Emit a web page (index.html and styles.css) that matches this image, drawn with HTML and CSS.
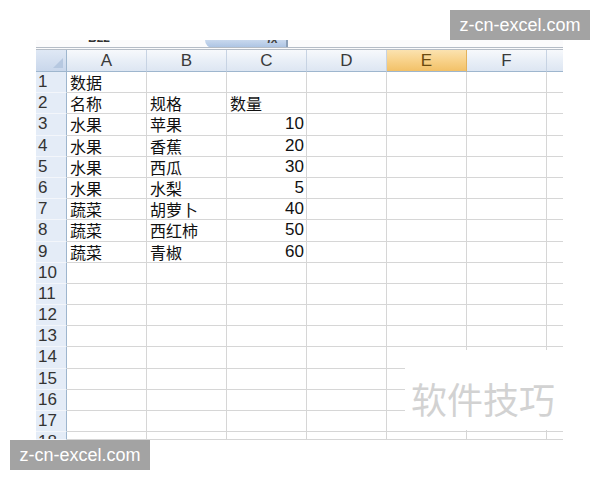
FILE: index.html
```html
<!DOCTYPE html>
<html lang="zh">
<head>
<meta charset="utf-8">
<link rel="stylesheet" href="styles.css">
</head>
<body>
<div class="page">
  <div class="badge badge-top">z-cn-excel.com</div>
  <div class="sheet">
    <div class="strip">
      <div class="namebox"><span>B22</span></div>
      <div class="fxtab"><span>fx</span></div>
    </div>
    <div class="grid">
      <div class="row head">
        <div class="corner"><span class="tri"></span></div>
        <div class="ch">A</div><div class="ch">B</div><div class="ch">C</div><div class="ch">D</div><div class="ch sel">E</div><div class="ch">F</div><div class="ch"></div>
      </div>
      <div class="row"><div class="rh">1</div><div class="c">数据</div><div class="c"></div><div class="c"></div><div class="c"></div><div class="c"></div><div class="c"></div><div class="c"></div></div>
      <div class="row"><div class="rh">2</div><div class="c">名称</div><div class="c">规格</div><div class="c">数量</div><div class="c"></div><div class="c"></div><div class="c"></div><div class="c"></div></div>
      <div class="row"><div class="rh">3</div><div class="c">水果</div><div class="c">苹果</div><div class="c n">10</div><div class="c"></div><div class="c"></div><div class="c"></div><div class="c"></div></div>
      <div class="row"><div class="rh">4</div><div class="c">水果</div><div class="c">香蕉</div><div class="c n">20</div><div class="c"></div><div class="c"></div><div class="c"></div><div class="c"></div></div>
      <div class="row"><div class="rh">5</div><div class="c">水果</div><div class="c">西瓜</div><div class="c n">30</div><div class="c"></div><div class="c"></div><div class="c"></div><div class="c"></div></div>
      <div class="row"><div class="rh">6</div><div class="c">水果</div><div class="c">水梨</div><div class="c n">5</div><div class="c"></div><div class="c"></div><div class="c"></div><div class="c"></div></div>
      <div class="row"><div class="rh">7</div><div class="c">蔬菜</div><div class="c">胡萝卜</div><div class="c n">40</div><div class="c"></div><div class="c"></div><div class="c"></div><div class="c"></div></div>
      <div class="row"><div class="rh">8</div><div class="c">蔬菜</div><div class="c">西红柿</div><div class="c n">50</div><div class="c"></div><div class="c"></div><div class="c"></div><div class="c"></div></div>
      <div class="row"><div class="rh">9</div><div class="c">蔬菜</div><div class="c">青椒</div><div class="c n">60</div><div class="c"></div><div class="c"></div><div class="c"></div><div class="c"></div></div>
      <div class="row"><div class="rh">10</div><div class="c"></div><div class="c"></div><div class="c"></div><div class="c"></div><div class="c"></div><div class="c"></div><div class="c"></div></div>
      <div class="row"><div class="rh">11</div><div class="c"></div><div class="c"></div><div class="c"></div><div class="c"></div><div class="c"></div><div class="c"></div><div class="c"></div></div>
      <div class="row"><div class="rh">12</div><div class="c"></div><div class="c"></div><div class="c"></div><div class="c"></div><div class="c"></div><div class="c"></div><div class="c"></div></div>
      <div class="row"><div class="rh">13</div><div class="c"></div><div class="c"></div><div class="c"></div><div class="c"></div><div class="c"></div><div class="c"></div><div class="c"></div></div>
      <div class="row"><div class="rh">14</div><div class="c"></div><div class="c"></div><div class="c"></div><div class="c"></div><div class="c"></div><div class="c"></div><div class="c"></div></div>
      <div class="row"><div class="rh">15</div><div class="c"></div><div class="c"></div><div class="c"></div><div class="c"></div><div class="c"></div><div class="c"></div><div class="c"></div></div>
      <div class="row"><div class="rh">16</div><div class="c"></div><div class="c"></div><div class="c"></div><div class="c"></div><div class="c"></div><div class="c"></div><div class="c"></div></div>
      <div class="row"><div class="rh">17</div><div class="c"></div><div class="c"></div><div class="c"></div><div class="c"></div><div class="c"></div><div class="c"></div><div class="c"></div></div>
      <div class="row last"><div class="rh">18</div><div class="c"></div><div class="c"></div><div class="c"></div><div class="c"></div><div class="c"></div><div class="c"></div><div class="c"></div></div>
    </div>
    <div class="wm">软件技巧</div>
  </div>
  <div class="badge badge-bottom">z-cn-excel.com</div>
</div>
</body>
</html>
```
FILE: styles.css
```css
* { box-sizing: border-box; }
html, body { margin: 0; padding: 0; background: #fff; }
.page {
  position: relative;
  width: 600px;
  height: 480px;
  overflow: hidden;
  padding: 40px 0 0 36px;
  font-family: "Liberation Sans", "Noto Sans CJK SC", sans-serif;
}
.sheet {
  position: relative;
  width: 527px;
}
.strip {
  height: 10px;
  display: flex;
  border-bottom: 3px double #b4bcc6;
  background: #fbfbfc;
  overflow: hidden;
}
.namebox {
  width: 169px;
  position: relative;
  overflow: hidden;
}
.namebox span {
  position: absolute;
  left: 52px;
  top: -9px;
  font-size: 12px;
  font-weight: bold;
  color: #333;
}
.fxtab {
  width: 83px;
  height: 8px;
  position: relative;
  background: linear-gradient(#c9d9ee, #aac2e2);
  border-right: 2px solid #8ca0b8;
  border-bottom-left-radius: 10px;
  overflow: hidden;
}
.fxtab span {
  position: absolute;
  right: 8px;
  top: -8px;
  font-size: 12px;
  font-style: italic;
  font-weight: bold;
  color: #444;
}
.grid {
  height: 390px;
  overflow: hidden;
}
.row {
  display: grid;
  grid-template-columns: 31px repeat(6, 80px) 16px;
  height: 21.2px;
}
.row.head { height: 22px; }
.row > div { overflow: hidden; }
.row > div:last-child { border-right: 0; }
.corner {
  position: relative;
  background: linear-gradient(#dfe8f5, #c9d7eb);
  border-right: 1px solid #9eb6ce;
  border-bottom: 1px solid #9eb6ce;
}
.tri {
  position: absolute;
  right: 3px;
  bottom: 3px;
  width: 0;
  height: 0;
  border-left: 10px solid transparent;
  border-bottom: 10px solid #b6c8e0;
}
.ch {
  background: linear-gradient(#f7f9fc 0%, #e9eff7 50%, #dde6f2 100%);
  border-right: 1px solid #c7d3e3;
  border-bottom: 1px solid #9eb6ce;
  text-align: center;
  font-size: 17px;
  line-height: 21px;
  color: #3a3a3a;
}
.ch.sel {
  background: linear-gradient(#fbe2b0 0%, #f8d28a 50%, #f2c168 100%);
  border-right-color: #e3b25c;
  color: #6a4a10;
}
.rh {
  background: #e4ecf7;
  border-right: 1px solid #9eb6ce;
  border-bottom: 1px solid #f3f6fb;
  font-size: 17px;
  line-height: 20px;
  padding-left: 2px;
  color: #333;
}
.c {
  border-right: 1px solid #d6d6d6;
  border-bottom: 1px solid #d6d6d6;
  font-family: "Noto Sans CJK SC", sans-serif;
  font-size: 16px;
  line-height: 20px;
  padding: 0 2px 0 3px;
  color: #111;
  white-space: nowrap;
}
.c.n {
  text-align: right;
  font-family: "Liberation Sans", sans-serif;
  font-size: 17px;
  padding-right: 2px;
}
.row.last { height: 8px; }
.wm {
  position: absolute;
  left: 369px;
  top: 310px;
  width: 158px;
  height: 80px;
  background: #fff;
  font-family: "Noto Sans CJK SC", sans-serif;
  font-size: 36px;
  line-height: 36px;
  padding: 30px 0 0 6px;
  color: #d2d2d2;
  white-space: nowrap;
}
.badge {
  position: absolute;
  background: #a3a3a3;
  color: #fff;
  font-family: "Liberation Sans", sans-serif;
  font-size: 18px;
  line-height: 30px;
  width: 140px;
  height: 30px;
  text-align: center;
}
.badge-top { left: 450px; top: 10px; }
.badge-bottom { left: 10px; top: 440px; }
```
